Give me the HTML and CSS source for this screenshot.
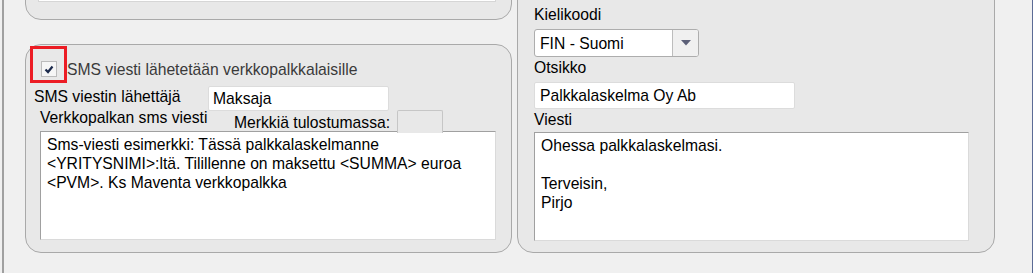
FILE: index.html
```html
<!DOCTYPE html>
<html lang="fi">
<head>
    <meta charset="UTF-8">
    <meta name="viewport" content="width=device-width, initial-scale=1.0">
    <title>Palkkalaskelman lähetys</title>
    <link rel="stylesheet" href="styles.css">
</head>
<body>
    <div class="window">
        <div class="col-left">
            <div class="panel panel-top">
                <div class="strip"></div>
            </div>

            <div class="panel panel-sms">
                <div class="row row-check">
                    <span class="mark">
                        <span class="checkbox">
                            <svg width="14" height="14" viewBox="0 0 14 14">
                                <polyline points="3.5,7.5 6,10 10.5,4.5" fill="none" stroke="#1c2a4c" stroke-width="2.2"/>
                            </svg>
                        </span>
                    </span>
                    <span class="check-label">SMS viesti lähetetään verkkopalkkalaisille</span>
                </div>

                <div class="row row-sender">
                    <span class="lbl lbl-sender">SMS viestin lähettäjä</span>
                    <div class="field field-sender">Maksaja</div>
                </div>

                <div class="row row-count">
                    <span class="lbl lbl-sms">Verkkopalkan sms viesti</span>
                    <span class="lbl lbl-count">Merkkiä tulostumassa:</span>
                    <span class="count-box"></span>
                </div>

                <div class="area area-sms">Sms-viesti esimerkki: Tässä palkkalaskelmanne<br>&lt;YRITYSNIMI&gt;:ltä. Tilillenne on maksettu &lt;SUMMA&gt; euroa<br>&lt;PVM&gt;. Ks Maventa verkkopalkka</div>
            </div>
        </div>

        <div class="panel panel-mail">
            <div class="lbl lbl-lang">Kielikoodi</div>
            <div class="select">
                <span class="select-value">FIN - Suomi</span>
                <span class="select-btn">
                    <svg width="10" height="6" viewBox="0 0 10 6">
                        <polygon points="0,0 10,0 5,5.5" fill="#5c6078"/>
                    </svg>
                </span>
            </div>
            <div class="lbl lbl-title">Otsikko</div>
            <div class="field field-title">Palkkalaskelma Oy Ab</div>
            <div class="lbl lbl-msg">Viesti</div>
            <div class="area area-mail">Ohessa palkkalaskelmasi.<br><br>Terveisin,<br>Pirjo</div>
        </div>
    </div>
</body>
</html>
```

FILE: styles.css
```css
* {
    box-sizing: border-box;
}
html, body {
    margin: 0;
    background-color: #f0f0f0;
    overflow: hidden;
}
body {
    font-family: "Liberation Sans", Arial, sans-serif;
    font-size: 15.7px;
    color: #000;
    width: 1033px;
    height: 273px;
}
.window {
    display: flex;
    gap: 5px;
    height: 273px;
    margin-left: 2px;
    padding-left: 21px;
    border-left: 2px solid #a0a0a0;
    border-right: 1px solid #5b6b95;
}
.col-left {
    width: 487px;
}
.panel {
    background-color: #e8e8e8;
    border: 1px solid #a9a9a9;
    border-radius: 16px;
}
.panel-top {
    height: 60px;
    margin-top: -40px;
    padding: 21px 0 0 12px;
}
.strip {
    width: 458px;
    height: 20px;
    background-color: #fff;
    border: 1px solid #d6d6d6;
}
.panel-sms {
    height: 209px;
    margin-top: 24px;
}
.row {
    display: flex;
    align-items: flex-start;
}
.lbl {
    line-height: 18px;
    white-space: nowrap;
}
.row-check {
    margin: 1px 0 0 4px;
}
.mark {
    width: 37px;
    height: 37px;
    padding: 12px 0 0 8px;
    border: 3px solid #ec1c24;
}
.checkbox {
    display: flex;
    align-items: center;
    justify-content: center;
    width: 16px;
    height: 16px;
    background-color: #f6f6f6;
    border: 1px solid #bcbcbc;
}
.check-label {
    margin-top: 15px;
    line-height: 18px;
    color: #3a3a3a;
}
.row-sender {
    margin-left: 8px;
}
.lbl-sender {
    width: 174px;
    margin-top: 5px;
}
.field {
    background-color: #fff;
    border: 1px solid #dcdcdc;
    border-radius: 2px;
    white-space: nowrap;
}
.field-sender {
    width: 181px;
    height: 25px;
    margin-top: 3px;
    padding: 2px 0 0 4px;
    line-height: 19px;
}
.row-count {
    margin: -3px 0 0 14px;
    height: 23px;
}
.lbl-sms {
    width: 194px;
    margin-top: 1px;
}
.lbl-count {
    width: 163px;
    margin-top: 6px;
}
.count-box {
    width: 46px;
    height: 23px;
    margin-top: 2px;
    background-color: #e8e8e8;
    border: 1px solid #c6c6c6;
    border-bottom: none;
    border-radius: 2px 2px 0 0;
}
.area {
    background-color: #fff;
    border: 1px solid #a0a0a0;
    border-right-color: #dadada;
    border-bottom-color: #dadada;
    padding: 3px 6px;
    line-height: 19px;
}
.area-sms {
    width: 456px;
    height: 109px;
    margin-left: 14px;
}
.panel-mail {
    width: 478px;
    height: 273px;
    margin-top: -20px;
    padding: 25px 0 0 16px;
}
.lbl-title,
.lbl-msg {
    margin-top: 2px;
}
.select {
    display: flex;
    width: 165px;
    height: 28px;
    margin-top: 5px;
    background-color: #fff;
    border: 1px solid #adadad;
    border-radius: 3px;
}
.select-value {
    flex: 1;
    padding: 4px 0 0 5px;
    line-height: 19px;
}
.select-btn {
    display: flex;
    align-items: center;
    justify-content: center;
    width: 26px;
    background-color: #f0f0f0;
    border-left: 1px solid #bdbdbd;
    border-radius: 0 2px 2px 0;
}
.field-title {
    width: 261px;
    height: 27px;
    margin-top: 5px;
    padding: 3px 0 0 5px;
    line-height: 19px;
}
.lbl-msg + .area {
    margin-top: 3px;
}
.area-mail {
    width: 435px;
    height: 109px;
}
```
